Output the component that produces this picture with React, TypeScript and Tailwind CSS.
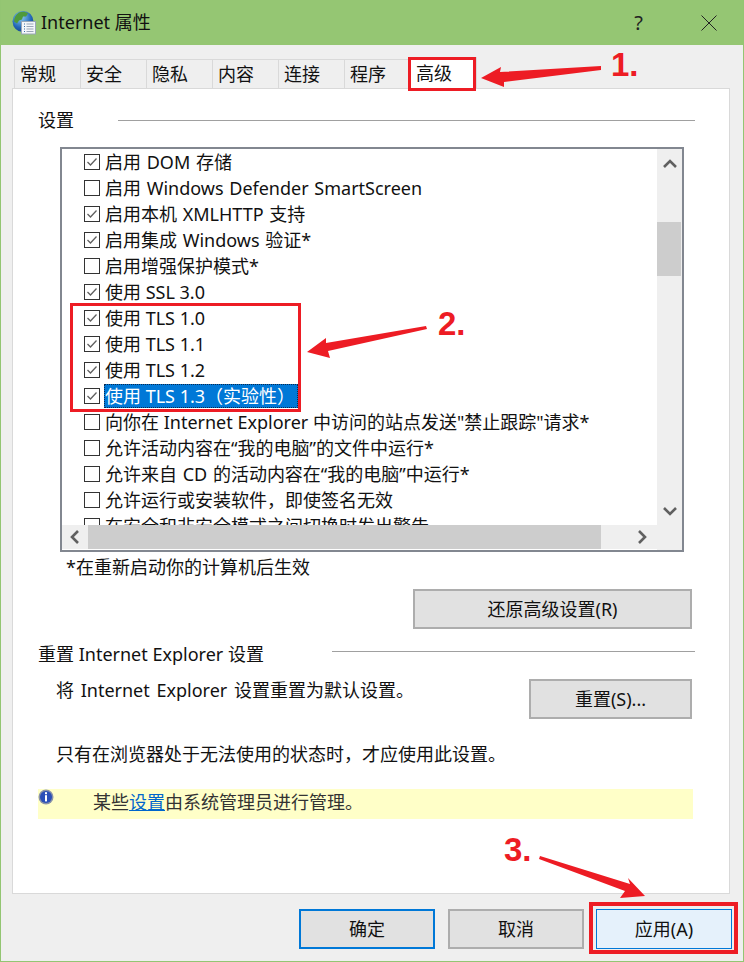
const tabs = ['常规', '安全', '隐私', '内容', '连接', '程序'];

const rows = [
  { label: '启用 DOM 存储', checked: true, wide: true },
  { label: '启用 Windows Defender SmartScreen', checked: false, wide: true },
  { label: '启用本机 XMLHTTP 支持', checked: true, wide: true },
  { label: '启用集成 Windows 验证*', checked: true, wide: true },
  { label: '启用增强保护模式*', checked: false },
  { label: '使用 SSL 3.0', checked: true },
  { label: '使用 TLS 1.0', checked: true },
  { label: '使用 TLS 1.1', checked: true },
  { label: '使用 TLS 1.2', checked: true },
  { label: '使用 TLS 1.3（实验性）', checked: true, selected: true },
  { label: '向你在 Internet Explorer 中访问的站点发送"禁止跟踪"请求*', checked: false },
  { label: '允许活动内容在“我的电脑”的文件中运行*', checked: false },
  { label: '允许来自 CD 的活动内容在“我的电脑”中运行*', checked: false, wide: true },
  { label: '允许运行或安装软件，即使签名无效', checked: false },
  { label: '在安全和非安全模式之间切换时发出警告', checked: false },
];

const Chevron = ({ points }: { points: string }) => (
  <svg width="16" height="16" viewBox="0 0 16 16" fill="none" stroke="#606060" strokeWidth="2.6">
    <polyline points={points} />
  </svg>
);

const Checkbox = ({ checked }: { checked: boolean }) => (
  <span className="flex h-4 w-4 shrink-0 items-center justify-center border border-[#333333] bg-white">
    {checked && (
      <svg width="12" height="12" viewBox="0 0 12 12" fill="none" stroke="#606060" strokeWidth="1.3">
        <polyline points="1.5,6 4.5,9 10.5,2.5" />
      </svg>
    )}
  </span>
);

const DialogButton = ({ label, className }: { label: string; className: string }) => (
  <button className={`flex h-10 items-center justify-center text-[18px] text-[#111111] ${className}`}>{label}</button>
);

const GlobeIcon = () => (
  <svg width="24" height="26" viewBox="0 0 24 26" className="shrink-0">
    <defs>
      <radialGradient id="globe" cx="0.4" cy="0.3" r="0.8">
        <stop offset="0" stopColor="#8fd0f5" />
        <stop offset="0.6" stopColor="#2468b8" />
        <stop offset="1" stopColor="#123a80" />
      </radialGradient>
    </defs>
    <circle cx="11" cy="11.5" r="10.5" fill="url(#globe)" />
    <path d="M7 2.5c3-1.5 7-1 9 1l-2 3-3 0-1 3-3 1-2 3-3-2c0-4 2-7 5-9z" fill="#4f9a3a" />
    <path d="M9 14l4-1 2 2-1 4-3 2-1-4z" fill="#4f9a3a" />
    <rect x="9.5" y="11.5" width="14" height="12.5" fill="#f4f6fa" stroke="#9aa6b8" />
    <path d="M12 14h1M12 16.5h1M12 19h1M12 21.5h1" stroke="#3a6ea8" />
    <path d="M14.5 14h7M14.5 16.5h7M14.5 19h7M14.5 21.5h7" stroke="#9aa6b8" />
  </svg>
);

const InfoIcon = () => (
  <svg width="16" height="16" viewBox="0 0 16 16" className="shrink-0">
    <circle cx="8" cy="8" r="7.5" fill="#8a93a8" />
    <circle cx="8" cy="8" r="6" fill="#2a4fb8" />
    <rect x="7" y="3.2" width="2" height="2" fill="#ffffff" />
    <rect x="7" y="6.2" width="2" height="6.2" fill="#ffffff" />
  </svg>
);

export default function App() {
  return (
    <div className="relative h-[962px] w-[744px] overflow-hidden [font-family:'Noto_Sans','Noto_Sans_CJK_SC',sans-serif]">
      <div className="flex h-full flex-col border-x border-b border-[#93c572] bg-[#efefef]">
        {/* title bar */}
        <div className="flex h-[45px] shrink-0 items-center bg-[#95c673] pl-[11px] text-[18px] text-[#111111]">
          <GlobeIcon />
          <span className="ml-[5px]">Internet 属性</span>
          <span className="ml-[auto] mr-[58px] text-[20px] text-[#222222]">?</span>
          <svg width="16" height="16" viewBox="0 0 16 16" stroke="#222222" strokeWidth="1" className="mr-[26px]">
            <path d="M0.5 0.5L15.5 15.5M15.5 0.5L0.5 15.5" />
          </svg>
        </div>

        {/* tabs */}
        <div className="mt-[14px] flex h-[29px] shrink-0 pl-[13px]">
          {tabs.map((t) => (
            <div
              key={t}
              className="flex h-[29px] w-[66px] items-center border-l border-t border-[#d9d9d9] pl-[5px] text-[18px] text-[#111111]"
            >
              {t}
            </div>
          ))}
          <div className="relative z-10 -ml-[2px] -mt-[2px] flex h-[32px] w-[69px] items-center border-x border-t border-[#d9d9d9] bg-white pl-[7px] text-[18px] text-[#111111]">
            高级
          </div>
        </div>

        {/* panel */}
        <div className="ml-[11px] h-[806px] w-[718px] shrink-0 border border-[#d9d9d9] bg-white text-[18px] text-[#111111]">
          <div className="mt-[18px] flex h-[26px] items-center pl-[25px]">
            <span className="w-[80px]">设置</span>
            <span className="h-px w-[577px] bg-[#a0a0a0]" />
          </div>

          {/* settings list */}
          <div className="ml-[47px] mt-[14px] grid h-[405px] w-[624px] grid-cols-[595px_25px] grid-rows-[376px_25px] border-2 border-[#828790]">
            <div className="overflow-hidden pl-[22px]">
              {rows.map((r) => (
                <div
                  key={r.label}
                  className={`flex h-[26px] items-center whitespace-nowrap ${r.wide ? '[word-spacing:1px]' : ''}`}
                >
                  <Checkbox checked={r.checked} />
                  {r.selected ? (
                    <span className="ml-1 flex h-6 items-center bg-[#0078d7] pl-px pr-[3px] text-white outline-1 -outline-offset-1 outline-dotted outline-[#0a2a50]">
                      {r.label}
                    </span>
                  ) : (
                    <span className="ml-[5px]">{r.label}</span>
                  )}
                </div>
              ))}
            </div>
            <div className="flex flex-col items-center bg-[#efefef]">
              <div className="flex h-[23px] shrink-0 items-end">
                <Chevron points="2,11 8,5 14,11" />
              </div>
              <div className="ml-[-1px] mt-[50px] h-[54px] w-6 bg-[#cdcdcd]" />
              <div className="mt-[auto] mb-[6px]">
                <Chevron points="2,5 8,11 14,5" />
              </div>
            </div>
            <div className="flex h-6 items-center bg-[#efefef]">
              <div className="flex w-[26px] justify-center">
                <Chevron points="11,2 5,8 11,14" />
              </div>
              <div className="h-6 w-[513px] bg-[#cdcdcd]" />
              <div className="ml-[33px]">
                <Chevron points="5,2 11,8 5,14" />
              </div>
            </div>
            <div className="bg-[#efefef]" />
          </div>

          <div className="mt-[3px] h-6 pl-[53px] leading-6">*在重新启动你的计算机后生效</div>

          <div className="mt-[10px] flex justify-end pr-[37px]">
            <DialogButton label="还原高级设置(R)" className="w-[279px] border-2 border-[#adadad] bg-[#e1e1e1]" />
          </div>

          <div className="mt-[12px] flex h-[26px] items-center pl-[25px]">
            <span className="w-[294px]">重置 Internet Explorer 设置</span>
            <span className="mb-[6px] h-px w-[363px] bg-[#a0a0a0]" />
          </div>

          <div className="mt-[12px] flex items-start justify-between pl-[43px] pr-[37px]">
            <span className="-mt-px h-6 leading-6 [word-spacing:2px]">将 Internet Explorer 设置重置为默认设置。</span>
            <DialogButton label="重置(S)..." className="w-[163px] border-2 border-[#adadad] bg-[#e1e1e1]" />
          </div>

          <div className="mt-[23px] h-6 pl-[43px] leading-6">只有在浏览器处于无法使用的状态时，才应使用此设置。</div>

          <div className="ml-[25px] mt-[23px] flex h-[30px] w-[655px] items-start bg-[#ffffc8]">
            <InfoIcon />
            <span className="ml-[39px] mt-px h-6 leading-6 text-[#333333]">
              某些<span className="text-[#0066cc] underline">设置</span>由系统管理员进行管理。
            </span>
          </div>
        </div>

        {/* footer buttons */}
        <div className="mt-[15px] flex pl-[298px]">
          <DialogButton label="确定" className="w-[136px] border-2 border-[#0078d7] bg-[#e1e1e1]" />
          <DialogButton label="取消" className="ml-[13px] w-[136px] border-2 border-[#adadad] bg-[#e1e1e1]" />
          <DialogButton label="应用(A)" className="ml-3 w-[136px] border border-[#0078d7] bg-[#e5f1fb]" />
        </div>
      </div>

      {/* red annotations drawn over the dialog */}
      <div className="absolute left-[408px] top-[57px] z-20 h-[34px] w-[68px] border-[3px] border-[#ed1c24]" />
      <div className="absolute left-[70px] top-[303px] z-20 h-[109px] w-[231px] border-[3px] border-[#ed1c24]" />
      <div className="absolute left-[589px] top-[902px] z-20 h-[52px] w-[149px] border-[4px] border-[#ed1c24]" />

      <svg className="absolute left-0 top-0 z-20" width="744" height="962" fill="#ed1c24">
        <polygon points="481,78 501,67 500,72 601,66 601,70 504,82 504,87" />
        <polygon points="307,352 326,338 326,343 426,326 427,329 328,351 330,358" />
        <polygon points="540,856 630,884 628,878 645,896 620,898 625,891 539,859" />
      </svg>

      <span className="absolute left-[611px] top-[46px] z-20 text-[33px] font-bold leading-[38px] text-[#ed1c24] [font-family:'Liberation_Sans',sans-serif]">
        1.
      </span>
      <span className="absolute left-[438px] top-[305px] z-20 text-[33px] font-bold leading-[38px] text-[#ed1c24] [font-family:'Liberation_Sans',sans-serif]">
        2.
      </span>
      <span className="absolute left-[504px] top-[831px] z-20 text-[33px] font-bold leading-[38px] text-[#ed1c24] [font-family:'Liberation_Sans',sans-serif]">
        3.
      </span>
    </div>
  );
}
